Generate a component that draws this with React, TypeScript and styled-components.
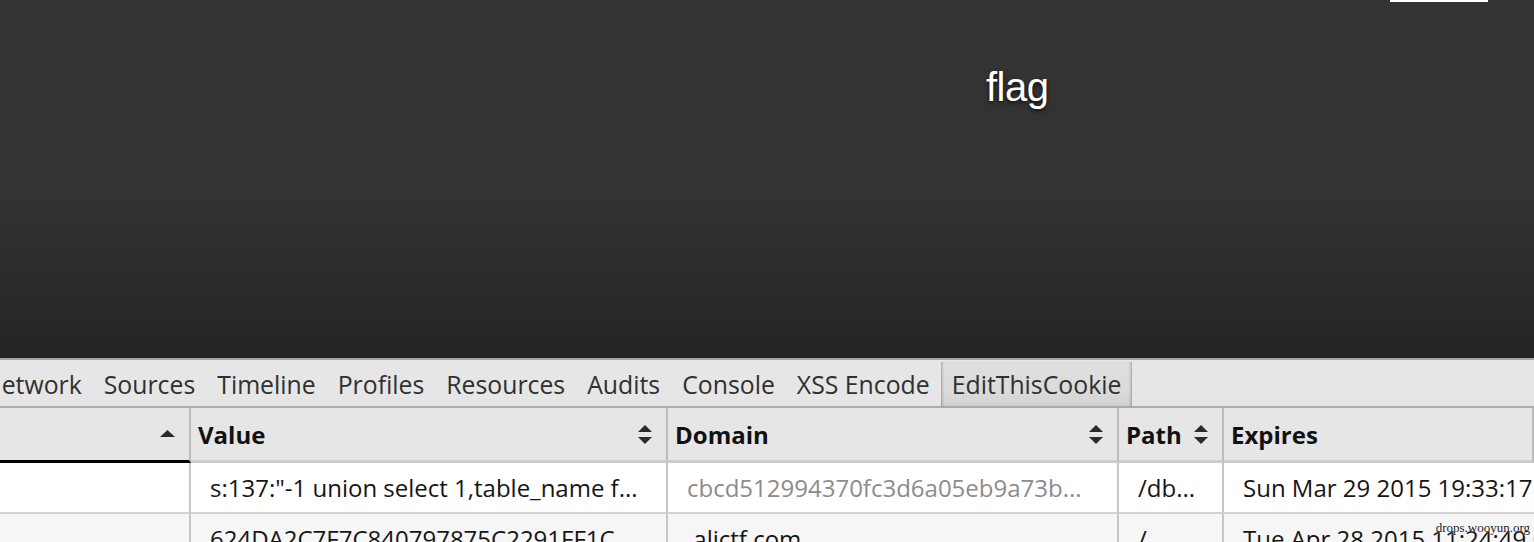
import React from "react";
import styled, { createGlobalStyle } from "styled-components";

const GlobalStyle = createGlobalStyle`
  html, body { margin: 0; padding: 0; background: #333; }
  body { font-family: "Open Sans", "Noto Sans", sans-serif; }
`;

const Page = styled.div`
  width: 1534px;
  height: 542px;
  overflow: hidden;
  position: relative;
  display: flex;
  flex-direction: column;
`;

const Viewport = styled.div`
  height: 358px;
  flex: none;
  display: flex;
  flex-direction: column;
  background: linear-gradient(to bottom, #333333 0%, #333333 55%, #242424 100%);
  border-bottom: 2px solid #a4a4a4;
`;

const TopStrip = styled.div`
  display: flex;
  justify-content: flex-end;
  padding-right: 46px;
`;

const WhiteBar = styled.div`
  width: 98px;
  height: 2px;
  background: #ffffff;
`;

const FlagRow = styled.div`
  margin-top: 62px;
  padding-left: 986px;
  font-family: "Liberation Sans", Arial, sans-serif;
  font-size: 40px;
  line-height: 46px;
  letter-spacing: -0.5px;
  color: #ffffff;
  text-shadow: 0 2px 4px rgba(0, 0, 0, 0.7);
`;

const Toolbar = styled.div`
  height: 46px;
  flex: none;
  background: #e6e6e6;
  border-bottom: 2px solid #acacac;
  display: flex;
  align-items: stretch;
  overflow: hidden;
`;

const TabList = styled.div`
  display: flex;
  align-items: stretch;
  margin-left: -28px;
  padding-top: 2px;
`;

const Tab = styled.div<{ $active?: boolean }>`
  display: flex;
  align-items: center;
  padding: 0 11px;
  font-family: "Open Sans", sans-serif;
  font-size: 24.8px;
  color: #303030;
  white-space: nowrap;
  background: ${(p) =>
    p.$active ? "linear-gradient(to bottom, #e0e0e0 0%, #dadada 70%, #d2d2d2 100%)" : "transparent"};
  box-shadow: ${(p) =>
    p.$active
      ? "inset 3px 0 3px -2px rgba(0,0,0,0.3), inset -3px 0 3px -2px rgba(0,0,0,0.3)"
      : "none"};
`;

const Table = styled.div`
  display: grid;
  grid-template-columns: 191px 477px 451px 105px 1fr;
  background: #ffffff;
`;

const HeadCell = styled.div<{ $sorted?: boolean; $packed?: boolean }>`
  height: 52px;
  display: flex;
  align-items: center;
  justify-content: ${(p) => (p.$packed ? "flex-start" : "space-between")};
  gap: 12px;
  padding: 0 14px 0 7px;
  background: #e6e6e6;
  border-right: 2px solid #bdbdbd;
  border-bottom: 3px solid ${(p) => (p.$sorted ? "#000000" : "#cdcdcd")};
  font-family: "Open Sans", sans-serif;
  font-weight: 700;
  font-size: 24px;
  color: #111;
  white-space: nowrap;
  &:last-child { border-right: none; }
`;

const Cell = styled.div<{ $muted?: boolean; $alt?: boolean }>`
  height: 49px;
  display: flex;
  align-items: center;
  padding-left: 19px;
  background: ${(p) => (p.$alt ? "#f6f6f6" : "#ffffff")};
  border-right: 2px solid #c6c6c6;
  border-bottom: 2px solid #d2d2d2;
  font-family: "Open Sans", sans-serif;
  font-size: 24px;
  color: ${(p) => (p.$muted ? "#8c8c8c" : "#151515")};
  white-space: nowrap;
  overflow: hidden;
  &:nth-child(5n) { border-right: none; }
`;

const SortIcon = styled.svg`
  flex: none;
  fill: #2b2b2b;
`;

const Watermark = styled.div`
  position: absolute;
  right: 4px;
  bottom: 6px;
  font-family: "Liberation Serif", "Times New Roman", serif;
  font-size: 13px;
  color: #222;
  text-shadow: 0 0 2px #fff;
`;

const UpArrow = () => (
  <SortIcon width="15" height="8" viewBox="0 0 15 8">
    <polygon points="7.5,0 15,7 0,7" />
  </SortIcon>
);

const BothArrows = () => (
  <SortIcon width="14" height="19" viewBox="0 0 14 19">
    <polygon points="7,0 14,7 0,7" />
    <polygon points="0,12 14,12 7,19" />
  </SortIcon>
);

const tabs = [
  "Network",
  "Sources",
  "Timeline",
  "Profiles",
  "Resources",
  "Audits",
  "Console",
  "XSS Encode",
  "EditThisCookie",
];

const rows = [
  {
    name: "",
    value: 's:137:"-1 union select 1,table_name f...',
    domain: "cbcd512994370fc3d6a05eb9a73b...",
    muted: true,
    path: "/db...",
    expires: "Sun Mar 29 2015 19:33:17 GMT+0800",
  },
  {
    name: "",
    value: "624DA2C7F7C840797875C2291FF1C",
    domain: ".alictf.com",
    muted: false,
    path: "/",
    expires: "Tue Apr 28 2015 11:24:49 GMT+0800",
  },
];

export default function App() {
  return (
    <>
      <GlobalStyle />
      <Page>
        <Viewport>
          <TopStrip>
            <WhiteBar />
          </TopStrip>
          <FlagRow>flag</FlagRow>
        </Viewport>
        <Toolbar>
          <TabList>
            {tabs.map((t) => (
              <Tab key={t} $active={t === "EditThisCookie"}>
                {t}
              </Tab>
            ))}
          </TabList>
        </Toolbar>
        <Table>
          <HeadCell $sorted>
            <span />
            <UpArrow />
          </HeadCell>
          <HeadCell>
            <span>Value</span>
            <BothArrows />
          </HeadCell>
          <HeadCell>
            <span>Domain</span>
            <BothArrows />
          </HeadCell>
          <HeadCell $packed>
            <span>Path</span>
            <BothArrows />
          </HeadCell>
          <HeadCell>
            <span>Expires</span>
          </HeadCell>
          {rows.map((r, i) => (
            <React.Fragment key={i}>
              <Cell $alt={i % 2 === 1}>{r.name}</Cell>
              <Cell $alt={i % 2 === 1}>{r.value}</Cell>
              <Cell $alt={i % 2 === 1} $muted={r.muted}>
                {r.domain}
              </Cell>
              <Cell $alt={i % 2 === 1}>{r.path}</Cell>
              <Cell $alt={i % 2 === 1}>{r.expires}</Cell>
            </React.Fragment>
          ))}
        </Table>
        <Watermark>drops.wooyun.org</Watermark>
      </Page>
    </>
  );
}
